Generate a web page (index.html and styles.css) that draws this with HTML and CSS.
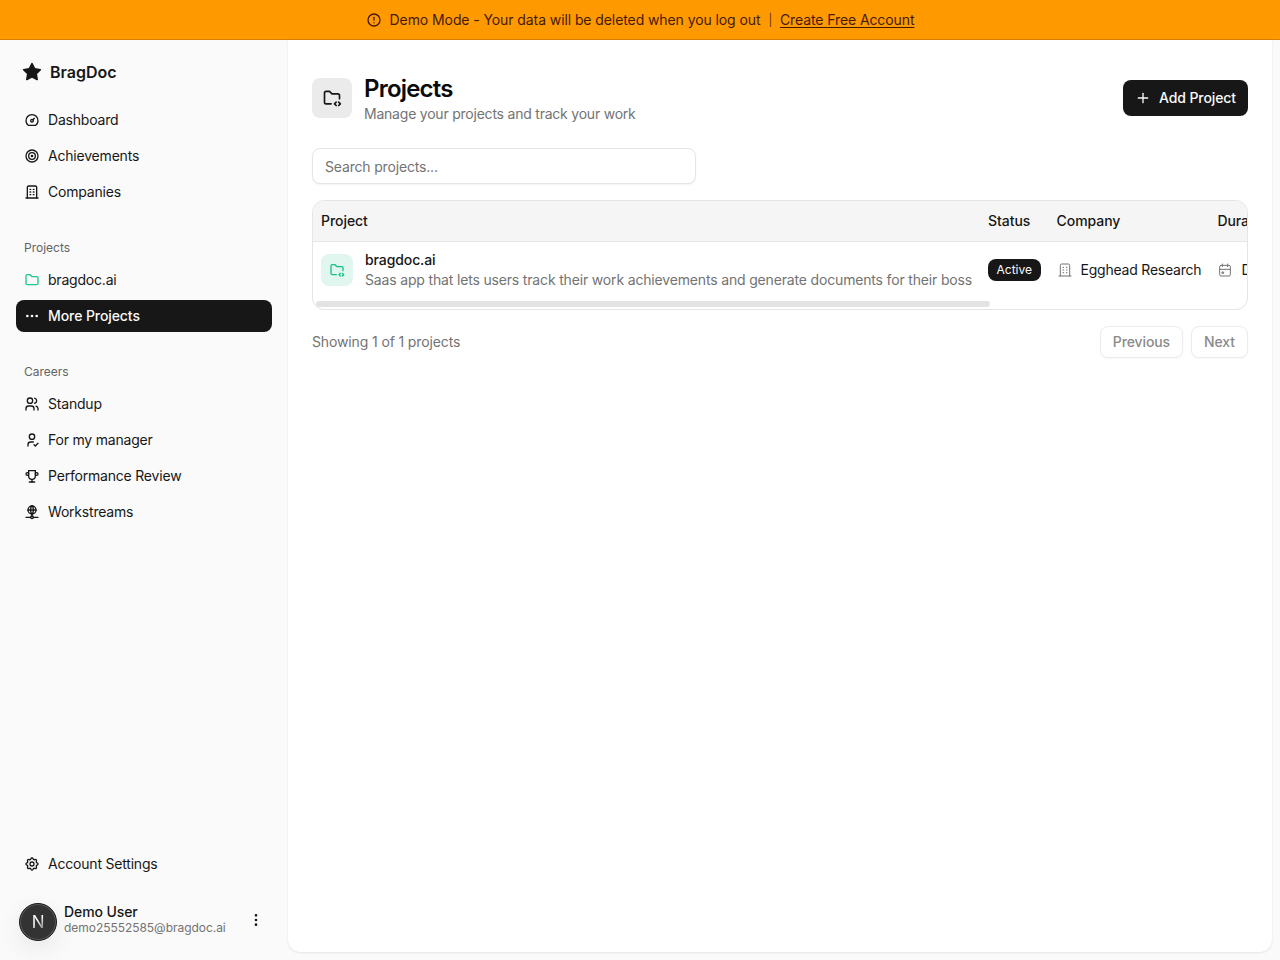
FILE: index.html
```html
<!DOCTYPE html>
<html lang="en">
<head>
<meta charset="utf-8">
<title>Projects - BragDoc</title>
<link rel="stylesheet" href="styles.css">
</head>
<body>
<svg class="sprite" xmlns="http://www.w3.org/2000/svg">
  <symbol id="i-alert" viewBox="0 0 24 24"><path d="M3 12a9 9 0 1 0 18 0a9 9 0 0 0 -18 0"/><path d="M12 8v4"/><path d="M12 16h.01"/></symbol>
  <symbol id="i-star" viewBox="0 0 24 24"><path class="fill" d="M8.243 7.34l-6.38 .925l-.113 .023a1 1 0 0 0 -.44 1.684l4.622 4.499l-1.09 6.355l-.013 .11a1 1 0 0 0 1.464 .944l5.706 -3l5.693 3l.1 .046a1 1 0 0 0 1.352 -1.1l-1.091 -6.355l4.624 -4.5l.078 -.085a1 1 0 0 0 -.633 -1.62l-6.38 -.926l-2.852 -5.78a1 1 0 0 0 -1.794 0l-2.853 5.78z"/></symbol>
  <symbol id="i-dashboard" viewBox="0 0 24 24"><path d="M10 13a2 2 0 1 0 4 0a2 2 0 1 0 -4 0"/><path d="M13.45 11.55l2.05 -2.05"/><path d="M6.4 20a9 9 0 1 1 11.2 0z"/></symbol>
  <symbol id="i-target" viewBox="0 0 24 24"><path d="M11 12a1 1 0 1 0 2 0a1 1 0 1 0 -2 0"/><path d="M7 12a5 5 0 1 0 10 0a5 5 0 1 0 -10 0"/><path d="M3 12a9 9 0 1 0 18 0a9 9 0 1 0 -18 0"/></symbol>
  <symbol id="i-building" viewBox="0 0 24 24"><path d="M3 21l18 0"/><path d="M9 8l1 0"/><path d="M9 12l1 0"/><path d="M9 16l1 0"/><path d="M14 8l1 0"/><path d="M14 12l1 0"/><path d="M14 16l1 0"/><path d="M5 21v-16a2 2 0 0 1 2 -2h10a2 2 0 0 1 2 2v16"/></symbol>
  <symbol id="i-folder" viewBox="0 0 24 24"><path d="M5 4h4l3 3h7a2 2 0 0 1 2 2v8a2 2 0 0 1 -2 2h-14a2 2 0 0 1 -2 -2v-11a2 2 0 0 1 2 -2"/></symbol>
  <symbol id="i-dots" viewBox="0 0 24 24"><path d="M4 12a1 1 0 1 0 2 0a1 1 0 1 0 -2 0"/><path d="M11 12a1 1 0 1 0 2 0a1 1 0 1 0 -2 0"/><path d="M18 12a1 1 0 1 0 2 0a1 1 0 1 0 -2 0"/></symbol>
  <symbol id="i-dots-v" viewBox="0 0 24 24"><path d="M11 12a1 1 0 1 0 2 0a1 1 0 1 0 -2 0"/><path d="M11 19a1 1 0 1 0 2 0a1 1 0 1 0 -2 0"/><path d="M11 5a1 1 0 1 0 2 0a1 1 0 1 0 -2 0"/></symbol>
  <symbol id="i-users" viewBox="0 0 24 24"><path d="M5 7a4 4 0 1 0 8 0a4 4 0 1 0 -8 0"/><path d="M3 21v-2a4 4 0 0 1 4 -4h4a4 4 0 0 1 4 4v2"/><path d="M16 3.13a4 4 0 0 1 0 7.75"/><path d="M21 21v-2a4 4 0 0 0 -3 -3.85"/></symbol>
  <symbol id="i-user-check" viewBox="0 0 24 24"><path d="M8 7a4 4 0 1 0 8 0a4 4 0 0 0 -8 0"/><path d="M6 21v-2a4 4 0 0 1 4 -4h4"/><path d="M15 19l2 2l4 -4"/></symbol>
  <symbol id="i-trophy" viewBox="0 0 24 24"><path d="M8 21l8 0"/><path d="M12 17l0 4"/><path d="M7 4l10 0"/><path d="M17 4v8a5 5 0 0 1 -10 0v-8"/><path d="M3 9a2 2 0 1 0 4 0a2 2 0 1 0 -4 0"/><path d="M17 9a2 2 0 1 0 4 0a2 2 0 1 0 -4 0"/></symbol>
  <symbol id="i-network" viewBox="0 0 24 24"><path d="M6 9a6 6 0 1 0 12 0a6 6 0 0 0 -12 0"/><path d="M12 3c1.333 .333 2 2.333 2 6s-.667 5.667 -2 6"/><path d="M12 3c-1.333 .333 -2 2.333 -2 6s.667 5.667 2 6"/><path d="M6 9h12"/><path d="M3 20h7"/><path d="M14 20h7"/><path d="M10 20a2 2 0 1 0 4 0a2 2 0 0 0 -4 0"/><path d="M12 15v3"/></symbol>
  <symbol id="i-settings" viewBox="0 0 24 24"><path d="M10.325 4.317c.426 -1.756 2.924 -1.756 3.35 0a1.724 1.724 0 0 0 2.573 1.066c1.543 -.94 3.31 .826 2.37 2.37a1.724 1.724 0 0 0 1.065 2.572c1.756 .426 1.756 2.924 0 3.35a1.724 1.724 0 0 0 -1.066 2.573c.94 1.543 -.826 3.31 -2.37 2.37a1.724 1.724 0 0 0 -2.572 1.065c-.426 1.756 -2.924 1.756 -3.35 0a1.724 1.724 0 0 0 -2.573 -1.066c-1.543 .94 -3.31 -.826 -2.37 -2.37a1.724 1.724 0 0 0 -1.065 -2.572c-1.756 -.426 -1.756 -2.924 0 -3.35a1.724 1.724 0 0 0 1.066 -2.573c-.94 -1.543 .826 -3.31 2.37 -2.37c1 .608 2.296 .07 2.572 -1.065z"/><path d="M9 12a3 3 0 1 0 6 0a3 3 0 0 0 -6 0"/></symbol>
  <symbol id="i-folder-code" viewBox="0 0 24 24"><path d="M11 19h-6a2 2 0 0 1 -2 -2v-11a2 2 0 0 1 2 -2h4l3 3h7a2 2 0 0 1 2 2v4"/><path d="M20 21l2 -2l-2 -2"/><path d="M17 17l-2 2l2 2"/></symbol>
  <symbol id="i-plus" viewBox="0 0 24 24"><path d="M12 5l0 14"/><path d="M5 12l14 0"/></symbol>
  <symbol id="i-calendar" viewBox="0 0 24 24"><path d="M4 7a2 2 0 0 1 2 -2h12a2 2 0 0 1 2 2v12a2 2 0 0 1 -2 2h-12a2 2 0 0 1 -2 -2z"/><path d="M16 3l0 4"/><path d="M8 3l0 4"/><path d="M4 11l16 0"/><path d="M8 15h2v2h-2z"/></symbol>
</svg>

<div class="banner">
  <svg class="icon banner-icon"><use href="#i-alert"/></svg>
  <span class="banner-text">Demo Mode - Your data will be deleted when you log out</span>
  <span class="banner-sep">|</span>
  <a class="banner-link" href="#">Create Free Account</a>
</div>

<div class="shell">
  <aside class="sidebar">
    <a class="brand" href="#"><svg class="brand-star"><use href="#i-star"/></svg><span>BragDoc</span></a>

    <nav class="nav-group">
      <a class="nav-item" href="#"><svg class="icon"><use href="#i-dashboard"/></svg>Dashboard</a>
      <a class="nav-item" href="#"><svg class="icon"><use href="#i-target"/></svg>Achievements</a>
      <a class="nav-item" href="#"><svg class="icon"><use href="#i-building"/></svg>Companies</a>
    </nav>

    <nav class="nav-group nav-group-labelled">
      <div class="nav-label">Projects</div>
      <a class="nav-item" href="#"><svg class="icon icon-green"><use href="#i-folder"/></svg>bragdoc.ai</a>
      <a class="nav-item nav-item-active" href="#"><svg class="icon"><use href="#i-dots"/></svg>More Projects</a>
    </nav>

    <nav class="nav-group nav-group-labelled">
      <div class="nav-label">Careers</div>
      <a class="nav-item" href="#"><svg class="icon"><use href="#i-users"/></svg>Standup</a>
      <a class="nav-item" href="#"><svg class="icon"><use href="#i-user-check"/></svg>For my manager</a>
      <a class="nav-item" href="#"><svg class="icon"><use href="#i-trophy"/></svg>Performance Review</a>
      <a class="nav-item" href="#"><svg class="icon"><use href="#i-network"/></svg>Workstreams</a>
    </nav>

    <nav class="nav-group nav-group-bottom">
      <a class="nav-item" href="#"><svg class="icon"><use href="#i-settings"/></svg>Account Settings</a>
    </nav>

    <div class="user">
      <div class="avatar"><span class="avatar-letter">N</span></div>
      <div class="user-text">
        <div class="user-name">Demo User</div>
        <div class="user-email">demo25552585@bragdoc.ai</div>
      </div>
      <svg class="icon user-menu"><use href="#i-dots-v"/></svg>
    </div>
  </aside>

  <main class="main">
    <header class="page-head">
      <div class="page-title-wrap">
        <div class="page-icon"><svg class="icon-20"><use href="#i-folder-code"/></svg></div>
        <div>
          <h1 class="page-title">Projects</h1>
          <p class="page-sub">Manage your projects and track your work</p>
        </div>
      </div>
      <button class="btn-primary"><svg class="icon"><use href="#i-plus"/></svg>Add Project</button>
    </header>

    <input class="search" type="text" placeholder="Search projects...">

    <div class="table-card">
      <table class="table">
        <thead>
          <tr>
            <th>Project</th>
            <th>Status</th>
            <th>Company</th>
            <th>Duration</th>
          </tr>
        </thead>
        <tbody>
          <tr>
            <td>
              <div class="project-cell">
                <div class="project-icon"><svg class="icon"><use href="#i-folder-code"/></svg></div>
                <div>
                  <div class="project-name">bragdoc.ai</div>
                  <div class="project-desc">Saas app that lets users track their work achievements and generate documents for their boss</div>
                </div>
              </div>
            </td>
            <td><span class="badge">Active</span></td>
            <td><div class="meta-cell"><svg class="icon icon-muted"><use href="#i-building"/></svg>Egghead Research</div></td>
            <td><div class="meta-cell"><svg class="icon icon-muted"><use href="#i-calendar"/></svg>Dec 2024 - Present</div></td>
          </tr>
        </tbody>
      </table>
      <div class="scroll-thumb"></div>
    </div>

    <div class="table-foot">
      <span class="table-count">Showing 1 of 1 projects</span>
      <div class="pager">
        <button class="btn-page">Previous</button>
        <button class="btn-page">Next</button>
      </div>
    </div>
  </main>
</div>
</body>
</html>
```
FILE: styles.css
```css
* { box-sizing: border-box; }
html, body { height: 100%; }
body {
  margin: 0;
  height: 960px;
  overflow: hidden;
  display: flex;
  flex-direction: column;
  background: #fafafa;
  color: #171717;
  font-family: Inter, "Liberation Sans", sans-serif;
  font-size: 14px;
  line-height: 20px;
  letter-spacing: -.2px;
}
a { color: inherit; text-decoration: none; }
.sprite { display: none; }

.icon, .icon-20, .brand-star {
  flex: none;
  fill: none;
  stroke: currentColor;
  stroke-width: 2;
  stroke-linecap: round;
  stroke-linejoin: round;
}
.icon { width: 16px; height: 16px; }
.icon-20 { width: 20px; height: 20px; }
.fill { fill: currentColor; stroke: none; }

.banner {
  flex: none;
  height: 40px;
  display: flex;
  align-items: center;
  justify-content: center;
  background: #ff9900;
  border-bottom: 1px solid #d97f00;
  color: #451a03;
}
.banner-icon { margin-right: 8px; }
.banner-text { letter-spacing: -.09px; }
.banner-sep { margin: 0 8px; font-weight: 300; font-size: 12px; }
.banner-link { text-decoration: underline; text-underline-offset: 2px; letter-spacing: -.1px; }

.shell { flex: 1; display: flex; min-height: 0; }

.sidebar {
  flex: none;
  width: 288px;
  display: flex;
  flex-direction: column;
  padding: 16px 16px 0;
}
.brand {
  display: flex;
  align-items: center;
  gap: 8px;
  height: 32px;
  padding-left: 6px;
  font-size: 16px;
  font-weight: 600;
  letter-spacing: 0;
}
.brand-star { width: 20px; height: 20px; }

.nav-group { display: flex; flex-direction: column; gap: 4px; margin-top: 16px; }
.nav-group-labelled { margin-top: 24px; }
.nav-group-bottom { margin-top: auto; }
.nav-label {
  height: 32px;
  margin-bottom: -4px;
  padding: 0 8px;
  display: flex;
  align-items: center;
  font-size: 12px;
  letter-spacing: 0;
  color: #636363;
}
.nav-item {
  display: flex;
  align-items: center;
  gap: 8px;
  height: 32px;
  padding: 0 8px;
  border-radius: 8px;
}
.nav-item-active { background: #171717; color: #fafafa; font-weight: 500; letter-spacing: -.08px; }
.icon-green { color: #1fc795; }

.user {
  display: flex;
  align-items: center;
  margin: 23px -16px 19px;
  padding: 0 16px 0 19px;
  height: 38px;
}
.avatar {
  flex: none;
  width: 38px;
  height: 38px;
  border-radius: 50%;
  display: flex;
  align-items: center;
  justify-content: center;
  background: #333;
  border: 1px solid #1c1c1c;
  box-shadow: inset 0 0 0 1px #5a5a5a, 0 8px 24px rgba(0, 0, 0, .08);
  font-size: 17px;
  font-weight: 400;
}
.avatar-letter {
  background: linear-gradient(135deg, #fff 45%, #8a8a8a 85%);
  -webkit-background-clip: text;
  background-clip: text;
  color: transparent;
}
.user-text { flex: 1; min-width: 0; margin: 0 0 4px 7px; }
.user-name { font-weight: 500; line-height: 16px; letter-spacing: -.1px; }
.user-email { font-size: 12px; line-height: 16px; letter-spacing: -.04px; color: #737373; }
.user-menu { margin: 0 8px 4px 0; }

.main {
  flex: 1;
  min-width: 0;
  margin: 0 8px 8px 0;
  padding: 32px 24px 0;
  background: #fff;
  border-radius: 0 0 12px 12px;
  box-shadow: 0 1px 2px rgba(0, 0, 0, .08), 0 0 1px rgba(0, 0, 0, .1);
}

.page-head { display: flex; align-items: center; justify-content: space-between; height: 52px; }
.page-title-wrap { display: flex; align-items: center; gap: 12px; }
.page-icon {
  width: 40px;
  height: 40px;
  border-radius: 8px;
  background: #ebebeb;
  display: flex;
  align-items: center;
  justify-content: center;
}
.page-title {
  margin: 0;
  padding-top: 2px;
  font-size: 24px;
  line-height: 30px;
  font-weight: 600;
  letter-spacing: -.8px;
  color: #0a0a0a;
}
.page-sub { margin: 0; color: #737373; letter-spacing: -.22px; }
.btn-primary {
  height: 36px;
  padding: 0 12px;
  display: flex;
  align-items: center;
  gap: 8px;
  border: 0;
  border-radius: 8px;
  background: #171717;
  color: #fafafa;
  font: 500 14px/20px Inter, "Liberation Sans", sans-serif;
  letter-spacing: -.09px;
}

.search {
  display: block;
  width: 384px;
  height: 36px;
  margin-top: 24px;
  padding: 0 12px;
  border: 1px solid #e5e5e5;
  border-radius: 8px;
  background: #fff;
  box-shadow: 0 1px 2px rgba(0, 0, 0, .05);
  font: 14px/20px Inter, "Liberation Sans", sans-serif;
  letter-spacing: -.17px;
  color: #171717;
  outline: none;
}
.search::placeholder { color: #737373; opacity: 1; }

.table-card {
  position: relative;
  height: 110px;
  margin-top: 16px;
  border: 1px solid #e5e5e5;
  border-radius: 12px;
  overflow: hidden;
}
.table { border-collapse: collapse; white-space: nowrap; }
.table th {
  height: 40px;
  padding: 0 8px;
  text-align: left;
  font-weight: 500;
  letter-spacing: -.05px;
  background: #f5f5f5;
  border-bottom: 1px solid #e5e5e5;
}
.table td { padding: 8px; vertical-align: middle; height: 56px; }
.project-cell { display: flex; align-items: center; gap: 12px; }
.project-icon {
  flex: none;
  width: 32px;
  height: 32px;
  border-radius: 8px;
  background: #e0f6ee;
  color: #17c08c;
  display: flex;
  align-items: center;
  justify-content: center;
}
.project-name { font-weight: 500; letter-spacing: -.1px; }
.project-desc { color: #737373; letter-spacing: -.165px; }
.badge {
  display: inline-block;
  padding: 2px 8.5px;
  border-radius: 8px;
  background: #171717;
  color: #fafafa;
  font-size: 12px;
  line-height: 18px;
  font-weight: 400;
  letter-spacing: 0;
  vertical-align: middle;
}
.meta-cell { display: flex; align-items: center; gap: 8px; letter-spacing: -.22px; }
.icon-muted { color: #737373; stroke-width: 1.5; }
.scroll-thumb {
  position: absolute;
  left: 3px;
  top: 100px;
  width: 674px;
  height: 6px;
  border-radius: 3px;
  background: #e3e3e3;
}

.table-foot { display: flex; align-items: center; justify-content: space-between; margin-top: 16px; }
.table-count { color: #737373; letter-spacing: -.13px; }
.pager { display: flex; gap: 8px; }
.btn-page {
  height: 32px;
  padding: 0 12px;
  border: 1px solid #ececec;
  border-radius: 8px;
  background: #fff;
  box-shadow: 0 1px 2px rgba(0, 0, 0, .04);
  color: #8a8a8a;
  font: 500 14px/20px Inter, "Liberation Sans", sans-serif;
  letter-spacing: -.1px;
}
```
